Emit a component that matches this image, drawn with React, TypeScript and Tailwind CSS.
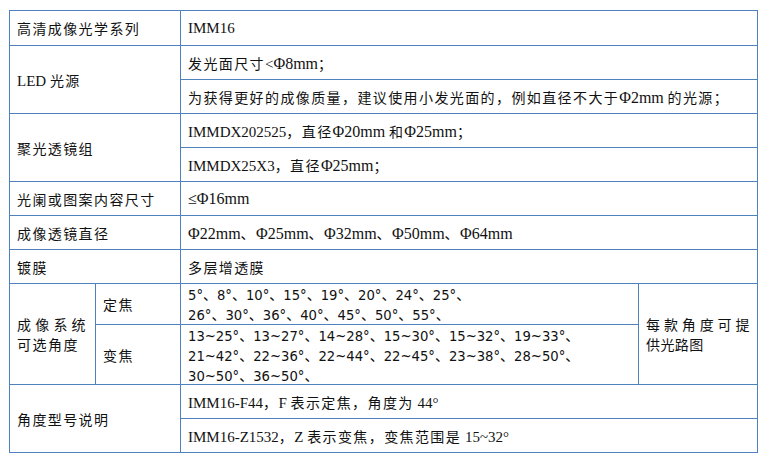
import React from "react";

const CJK = /([\u3000-\u303f\u4e00-\u9fff\uff00-\uffef]+)/;
const PHI = /(Φ\d+mm)/;

// splits a string so that Chinese runs get the wider spacing of the reference
function T({ text, sans = false }: { text: string; sans?: boolean }) {
  const parts = text.split(CJK).filter((p) => p.length > 0);
  return (
    <>
      {parts.map((p, i) => {
        if (CJK.test(p)) {
          return (
            <span
              key={i}
              className={
                sans
                  ? "[font-family:'Noto_Sans_CJK_SC',sans-serif]"
                  : "tracking-[1.4px] [font-family:'Noto_Sans_CJK_SC',sans-serif]"
              }
            >
              {p}
            </span>
          );
        }
        if (sans) {
          return (
            <span key={i} className="[font-family:'DejaVu_Sans','Noto_Sans_CJK_SC',sans-serif] text-[13.2px]">
              {p}
            </span>
          );
        }
        return p
          .split(PHI)
          .filter((q) => q.length > 0)
          .map((q, j) => (
            <span
              key={`${i}-${j}`}
              className={
                PHI.test(q) || q.startsWith("≤")
                  ? "[font-family:'Liberation_Serif',serif] text-[16px]"
                  : "[font-family:'Liberation_Serif',serif] text-[15px]"
              }
            >
              {q}
            </span>
          ));
      })}
    </>
  );
}

const cell = "border-r border-b border-[#4f81bd] px-[7px] flex flex-col justify-center";
const line = "h-[20px] whitespace-nowrap";

function Row({ text, sans }: { text: string; sans?: boolean }) {
  return (
    <div className={line}>
      <T text={text} sans={sans} />
    </div>
  );
}

export default function App() {
  return (
    <div className="w-[768px] h-[461px] bg-white pt-[10px] pl-[9px] text-[14px] leading-[20px] text-[#111]">
      <div className="grid w-[749px] grid-cols-[86px_85px_458px_119px] grid-rows-[35px_34px_34px_34px_34px_34px_34px_34px_41px_60px_34px_34px] border-l border-t border-[#4f81bd]">
        <div className={`${cell} col-span-2`}>
          <Row text="高清成像光学系列" />
        </div>
        <div className={`${cell} col-span-2`}>
          <Row text="IMM16" />
        </div>

        <div className={`${cell} col-span-2 row-span-2`}>
          <Row text="LED 光源" />
        </div>
        <div className={`${cell} col-span-2`}>
          <Row text="发光面尺寸<Φ8mm；" />
        </div>
        <div className={`${cell} col-span-2`}>
          <Row text="为获得更好的成像质量，建议使用小发光面的，例如直径不大于Φ2mm 的光源；" />
        </div>

        <div className={`${cell} col-span-2 row-span-2`}>
          <Row text="聚光透镜组" />
        </div>
        <div className={`${cell} col-span-2`}>
          <Row text="IMMDX202525，直径Φ20mm 和Φ25mm；" />
        </div>
        <div className={`${cell} col-span-2`}>
          <Row text="IMMDX25X3，直径Φ25mm；" />
        </div>

        <div className={`${cell} col-span-2`}>
          <Row text="光阑或图案内容尺寸" />
        </div>
        <div className={`${cell} col-span-2`}>
          <Row text="≤Φ16mm" />
        </div>

        <div className={`${cell} col-span-2`}>
          <Row text="成像透镜直径" />
        </div>
        <div className={`${cell} col-span-2`}>
          <Row text="Φ22mm、Φ25mm、Φ32mm、Φ50mm、Φ64mm" />
        </div>

        <div className={`${cell} col-span-2`}>
          <Row text="镀膜" />
        </div>
        <div className={`${cell} col-span-2`}>
          <Row text="多层增透膜" />
        </div>

        <div className={`${cell} row-span-2 [font-family:'Noto_Sans_CJK_SC',sans-serif]`}>
          <div className={`${line} tracking-[4.2px]`}>成像系统</div>
          <div className={`${line} tracking-[1.5px]`}>可选角度</div>
        </div>
        <div className={cell}>
          <Row text="定焦" />
        </div>
        <div className={cell}>
          <Row sans text="5°、8°、10°、15°、19°、20°、24°、25°、" />
          <Row sans text="26°、30°、36°、40°、45°、50°、55°、" />
        </div>
        <div className={`${cell} row-span-2 [font-family:'Noto_Sans_CJK_SC',sans-serif]`}>
          <div className={`${line} tracking-[3.9px]`}>每款角度可提</div>
          <div className={`${line} tracking-[0.4px]`}>供光路图</div>
        </div>

        <div className={cell}>
          <Row text="变焦" />
        </div>
        <div className={cell}>
          <Row sans text="13~25°、13~27°、14~28°、15~30°、15~32°、19~33°、" />
          <Row sans text="21~42°、22~36°、22~44°、22~45°、23~38°、28~50°、" />
          <Row sans text="30~50°、36~50°、" />
        </div>

        <div className={`${cell} col-span-2 row-span-2`}>
          <Row text="角度型号说明" />
        </div>
        <div className={`${cell} col-span-2`}>
          <Row text="IMM16-F44，F 表示定焦，角度为 44°" />
        </div>
        <div className={`${cell} col-span-2`}>
          <Row text="IMM16-Z1532，Z 表示变焦，变焦范围是 15~32°" />
        </div>
      </div>
    </div>
  );
}
